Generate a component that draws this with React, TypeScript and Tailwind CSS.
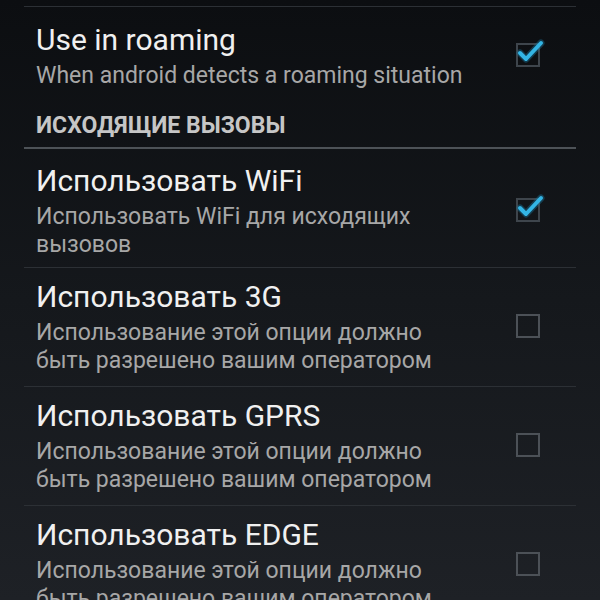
const FONT = "font-['Roboto','Liberation_Sans',sans-serif]";

type Pref = { title: string; summary: string[]; checked: boolean };

const ROWS: Pref[] = [
  { title: "Использовать WiFi", summary: ["Использовать WiFi для исходящих", "вызовов"], checked: true },
  { title: "Использовать 3G", summary: ["Использование этой опции должно", "быть разрешено вашим оператором"], checked: false },
  { title: "Использовать GPRS", summary: ["Использование этой опции должно", "быть разрешено вашим оператором"], checked: false },
  { title: "Использовать EDGE", summary: ["Использование этой опции должно", "быть разрешено вашим оператором"], checked: false },
];

function CheckBox({ checked }: { checked: boolean }) {
  return (
    <div className="relative w-6 h-6 shrink-0">
      <div className={`absolute inset-0 border-2 ${checked ? "border-[#3e454c]" : "border-[#4c5157]"}`} />
      {checked && (
        <svg className="absolute -top-[9px] -left-[2px] w-[32px] h-[32px]" viewBox="0 0 32 32">
          <path d="M6 19 L12 25 L27 9" fill="none" stroke="#1a6f92" strokeWidth="7" strokeLinecap="round" strokeLinejoin="round" opacity="0.45" />
          <path d="M6 19 L12 25 L27 9" fill="none" stroke="#33b5e5" strokeWidth="4" strokeLinecap="round" strokeLinejoin="round" />
        </svg>
      )}
    </div>
  );
}

function Row({ pref, pt }: { pref: Pref; pt: string }) {
  return (
    <div className={`flex items-center pl-3 pr-9 ${pt}`}>
      <div className="flex-1 min-w-0">
        <div className="text-[30px] leading-[40px] text-[#f0f0f0]">{pref.title}</div>
        <div className="mt-[2px]">
          {pref.summary.map((line, i) => (
            <div key={i} className="text-[23px] leading-[28px] text-[#a7a7a7] whitespace-nowrap">{line}</div>
          ))}
        </div>
      </div>
      <CheckBox checked={pref.checked} />
    </div>
  );
}

export default function App() {
  return (
    <div className={`w-[600px] h-[600px] overflow-hidden bg-gradient-to-b from-[#0c0e11] via-[#15181c] to-[#1e2126] ${FONT}`}>
      <div className="px-6 pt-[6px]">
        <div className="h-px bg-[#2c3035]" />
        <div className="pb-[8px]">
          <Row pref={{ title: "Use in roaming", summary: ["When android detects a roaming situation"], checked: true }} pt="pt-[13px]" />
        </div>
        <div className="pl-3 pt-[16px] pb-[10px] text-[23px] leading-[23px] font-bold text-[#c6c6c6]">ИСХОДЯЩИЕ ВЫЗОВЫ</div>
        <div className="h-[2px] bg-[#4d5257]" />
        {ROWS.map((r, i) => (
          <div key={i}>
            <div className={i === 0 ? "pb-[8px]" : "pb-[11px]"}>
              <Row pref={r} pt={i === 0 ? "pt-[12px]" : "pt-[9px]"} />
            </div>
            <div className="h-px bg-[#2c3035]" />
          </div>
        ))}
      </div>
    </div>
  );
}
